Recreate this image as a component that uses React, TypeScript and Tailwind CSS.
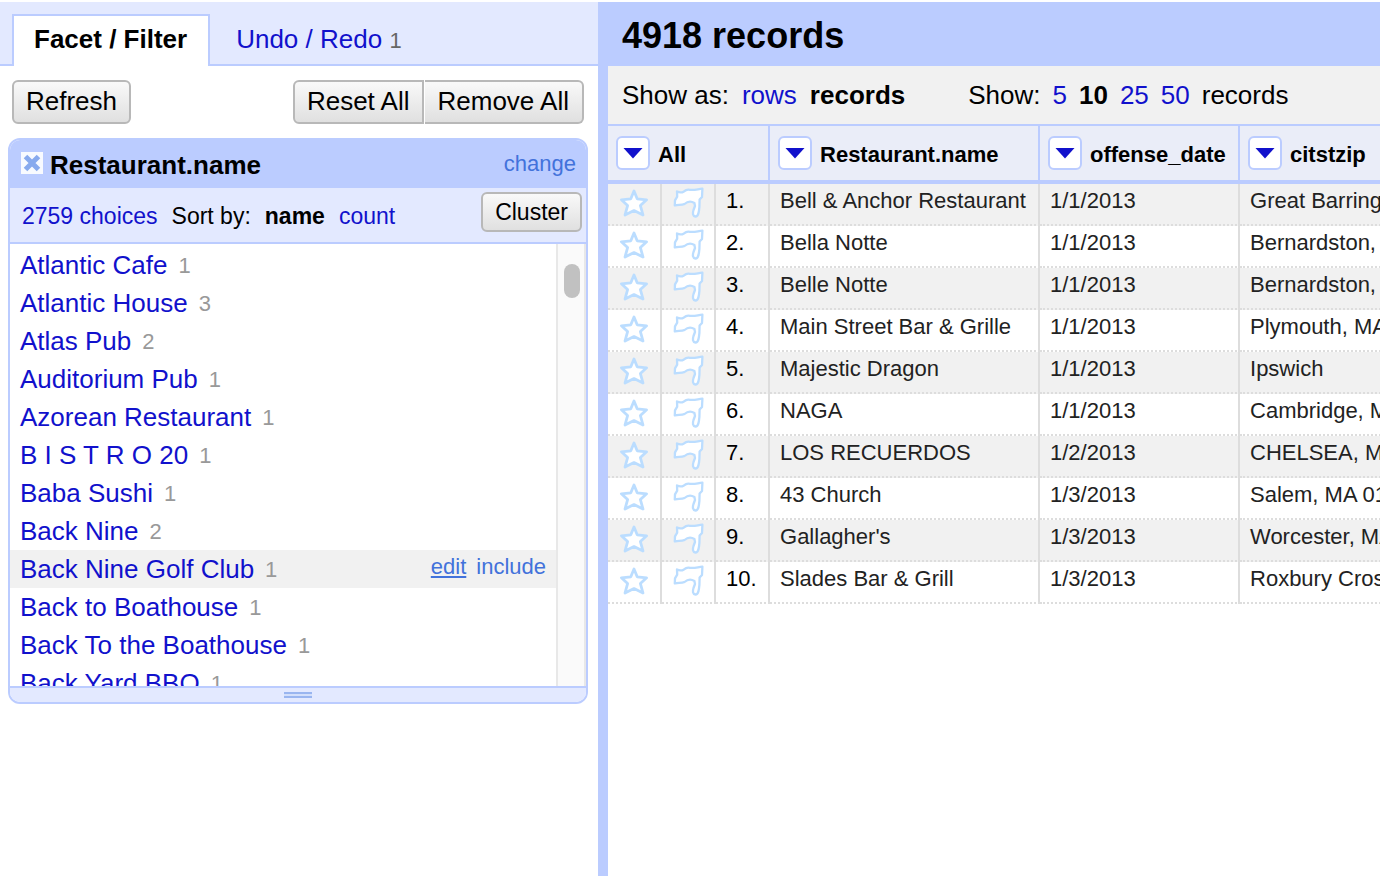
import React from "react";

const choices = [
  { name: "Atlantic Cafe", count: 1 },
  { name: "Atlantic House", count: 3 },
  { name: "Atlas Pub", count: 2 },
  { name: "Auditorium Pub", count: 1 },
  { name: "Azorean Restaurant", count: 1 },
  { name: "B I S T R O 20", count: 1 },
  { name: "Baba Sushi", count: 1 },
  { name: "Back Nine", count: 2 },
  { name: "Back Nine Golf Club", count: 1, active: true },
  { name: "Back to Boathouse", count: 1 },
  { name: "Back To the Boathouse", count: 1 },
  { name: "Back Yard BBQ", count: 1 },
];

const records = [
  ["Bell & Anchor Restaurant", "1/1/2013", "Great Barrington, MA"],
  ["Bella Notte", "1/1/2013", "Bernardston, MA"],
  ["Belle Notte", "1/1/2013", "Bernardston, MA"],
  ["Main Street Bar & Grille", "1/1/2013", "Plymouth, MA"],
  ["Majestic Dragon", "1/1/2013", "Ipswich"],
  ["NAGA", "1/1/2013", "Cambridge, MA"],
  ["LOS RECUERDOS", "1/2/2013", "CHELSEA, MA"],
  ["43 Church", "1/3/2013", "Salem, MA 01970"],
  ["Gallagher's", "1/3/2013", "Worcester, MA"],
  ["Slades Bar & Grill", "1/3/2013", "Roxbury Crossing"],
];

const buttonLook =
  "border-2 border-[#b8b8b8] bg-linear-to-b from-[#f9f9f9] to-[#e0e0e0] text-black";
const cellLine = "border-b-2 border-b-[#ddd] [border-bottom-style:dotted]";
const columnLine = "border-r-2 border-r-[#ddd]";

function Star() {
  return (
    <svg viewBox="0 0 30 30" className="block size-[30px]" aria-hidden="true">
      <path
        d="M15 3 L18.2 10.8 L27.6 11.8 L21.4 17.6 L24 27 L15 22.6 L6 27 L8.6 17.6 L2.4 11.8 L11.8 10.8 Z"
        fill="#fff"
        stroke="#bbddff"
        strokeWidth="2.8"
        strokeLinejoin="round"
      />
    </svg>
  );
}

function Flag() {
  return (
    <svg viewBox="0 0 32 32" className="block size-8" aria-hidden="true">
      <path
        d="M4 4.5 C6.5 5.8 9 5.6 11 4.4 C13 2.6 15 2.2 17 2.8 C21 3.6 25 2 29.4 1.6 L29 10 L26.6 12.5 L26.4 20 C26 24.5 25.5 29.5 22.5 29.5 C19.5 29 19.5 26 20.5 23 L22 19 L21.4 16 C18.5 14.2 14.5 14.4 11.5 17 C8.5 18.6 5 17.4 1.8 18.4 L2 13.4 L4.2 9.6 Z"
        fill="#fff"
        stroke="#bbddff"
        strokeWidth="2.3"
        strokeLinejoin="round"
      />
    </svg>
  );
}

function ColumnHead({ label }: { label: string }) {
  return (
    <div className="flex h-[54px] items-center gap-2 pl-2">
      <button
        type="button"
        aria-label={`${label} menu`}
        className="flex size-[34px] items-center justify-center rounded-md border-2 border-[#bbccff] bg-white"
      >
        <svg viewBox="0 0 20 12" className="h-3 w-5" aria-hidden="true">
          <path d="M0.5 1 H19.5 L10 11.5 Z" fill="#1111cc" />
        </svg>
      </button>
      <span className="pt-[2px]">{label}</span>
    </div>
  );
}

function Sidebar() {
  return (
    <aside className="w-[598px] shrink-0">
      <nav className="flex h-16 items-end bg-[#e3e9ff] text-[26px] leading-[46px]">
        <span className="h-[2px] w-3 bg-[#bbccff]" />
        <a
          href="#facets"
          className="h-[52px] border-2 border-b-0 border-[#bbccff] bg-white pr-[21px] pl-5 font-bold text-black"
        >
          Facet / Filter
        </a>
        <a
          href="#history"
          className="h-[52px] grow border-b-2 border-[#bbccff] pt-[2px] pl-[26px] text-[#1111cc]"
        >
          Undo / Redo <span className="text-[22px] text-[#666]">1</span>
        </a>
      </nav>

      <div className="flex justify-between px-3 py-[14px] text-[26px]">
        <button type="button" className={`h-11 rounded-md px-3 pb-[2px] leading-[38px] ${buttonLook}`}>
          Refresh
        </button>
        <div className="flex gap-px pr-[2px]">
          <button
            type="button"
            className={`h-11 rounded-l-md px-3 pb-[2px] leading-[38px] ${buttonLook}`}
          >
            Reset All
          </button>
          <button
            type="button"
            className={`h-11 rounded-r-md border-l-0 px-[13px] pb-[2px] leading-[38px] ${buttonLook}`}
          >
            Remove All
          </button>
        </div>
      </div>

      <section className="mr-[10px] ml-2 overflow-hidden rounded-xl border-2 border-[#bbccff] bg-white">
        <header className="flex h-12 items-center bg-[#bbccff] pr-[10px] pb-[2px] pl-[11px]">
          <button type="button" aria-label="Remove facet" className="size-[22px] bg-white/90">
            <svg viewBox="0 0 22 22" className="size-[22px]" aria-hidden="true">
              <path d="M4.5 4.5 L17.5 17.5 M17.5 4.5 L4.5 17.5" stroke="#88aaee" strokeWidth="5" />
            </svg>
          </button>
          <h2 className="grow pt-1 pl-[7px] text-[26px] font-bold">Restaurant.name</h2>
          <a href="#change" className="text-[22px] text-[#4272db]">
            change
          </a>
        </header>
        <div className="flex h-14 justify-between border-b-2 border-[#bbccff] bg-[#e3e9ff] pr-1 pl-3 text-[23px]">
          <div className="flex items-center gap-[14px] pt-[2px]">
            <a href="#choices" className="text-[#1111cc]">
              2759 choices
            </a>
            <span>Sort by:</span>
            <b>name</b>
            <a href="#count" className="text-[#1111cc]">
              count
            </a>
          </div>
          <button type="button" className={`mt-1 h-10 rounded-md px-3 leading-9 ${buttonLook}`}>
            Cluster
          </button>
        </div>
        <div className="flex h-[442px] overflow-hidden">
          <ul className="grow pt-[2px]">
            {choices.map((c) => (
              <li
                key={c.name}
                className={`flex h-[38px] pr-[10px] pl-[10px] text-[26px] leading-[38px] ${
                  c.active ? "bg-[#f1f1f1]" : ""
                }`}
              >
                <a href="#choice" className="text-[#1111cc]">
                  {c.name}
                </a>
                <span className="pt-px pl-[11px] text-[22px] text-[#999]">{c.count}</span>
                {c.active && (
                  <span className="ml-auto flex gap-[10px] text-[22px] leading-[34px] text-[#4272db]">
                    <a href="#edit" className="underline decoration-2 underline-offset-2">
                      edit
                    </a>
                    <a href="#include">include</a>
                  </span>
                )}
              </li>
            ))}
          </ul>
          <div className="w-[30px] shrink-0 border-x-2 border-[#e8e8e8] bg-[#fafafa] pt-5 pl-[6px]">
            <div className="h-[34px] w-4 rounded-lg bg-[#c1c1c1]" />
          </div>
        </div>
        <footer className="flex h-4 justify-center border-t-2 border-[#bbccff] bg-[#e3e9ff] pt-1">
          <span className="h-[6px] w-7 border-y-2 border-[#99b5f0] bg-[#d3dffb]" />
        </footer>
      </section>
    </aside>
  );
}

function RecordsTable() {
  return (
    <table className="w-[1000px] table-fixed border-separate border-spacing-0 text-left text-[22px] whitespace-nowrap">
      <colgroup>
        <col className="w-[54px]" />
        <col className="w-[54px]" />
        <col className="w-[54px]" />
        <col className="w-[270px]" />
        <col className="w-[200px]" />
        <col />
      </colgroup>
      <thead>
        <tr className="bg-[#eaedf8]">
          <th colSpan={3} className="border-t-2 border-r-2 border-b-4 border-[#bbccff] p-0">
            <ColumnHead label="All" />
          </th>
          {["Restaurant.name", "offense_date", "citstzip"].map((label) => (
            <th key={label} className="border-t-2 border-r-2 border-b-4 border-[#bbccff] p-0">
              <ColumnHead label={label} />
            </th>
          ))}
        </tr>
      </thead>
      <tbody className="leading-[34px] text-[#222]">
        {records.map((cells, i) => (
          <tr key={i} className="h-[42px] odd:bg-[#f1f1f1]">
            <td className={`p-0 pb-[2px] pl-[11px] ${cellLine} ${columnLine}`}>
              <Star />
            </td>
            <td className={`p-0 pb-[2px] pl-[11px] ${cellLine} ${columnLine}`}>
              <Flag />
            </td>
            <td className={`p-0 pb-[6px] pl-[10px] text-black ${cellLine} ${columnLine}`}>{i + 1}.</td>
            {cells.map((text, k) => (
              <td key={k} className={`p-0 pb-[6px] pl-[10px] ${cellLine} ${columnLine}`}>
                {text}
              </td>
            ))}
          </tr>
        ))}
      </tbody>
    </table>
  );
}

export default function App() {
  return (
    <div className="flex min-h-screen overflow-hidden bg-white pt-[2px] font-['Liberation_Sans',Arial,sans-serif] text-black">
      <Sidebar />
      <main className="min-w-0 grow overflow-hidden border-l-[10px] border-[#bbccff]">
        <h1 className="h-16 bg-[#bbccff] pl-[14px] text-[36px] leading-[68px] font-bold">4918 records</h1>
        <div className="flex h-[58px] items-center bg-[#f1f1f1] pl-[14px] text-[26px] whitespace-nowrap">
          <div className="flex gap-[13px]">
            <span>Show as:</span>
            <a href="#rows" className="text-[#1111cc]">
              rows
            </a>
            <b>records</b>
          </div>
          <div className="flex gap-3 pl-[63px]">
            <span>Show:</span>
            <a href="#5" className="text-[#1111cc]">
              5
            </a>
            <b>10</b>
            <a href="#25" className="text-[#1111cc]">
              25
            </a>
            <a href="#50" className="text-[#1111cc]">
              50
            </a>
            <span>records</span>
          </div>
        </div>
        <RecordsTable />
      </main>
    </div>
  );
}
